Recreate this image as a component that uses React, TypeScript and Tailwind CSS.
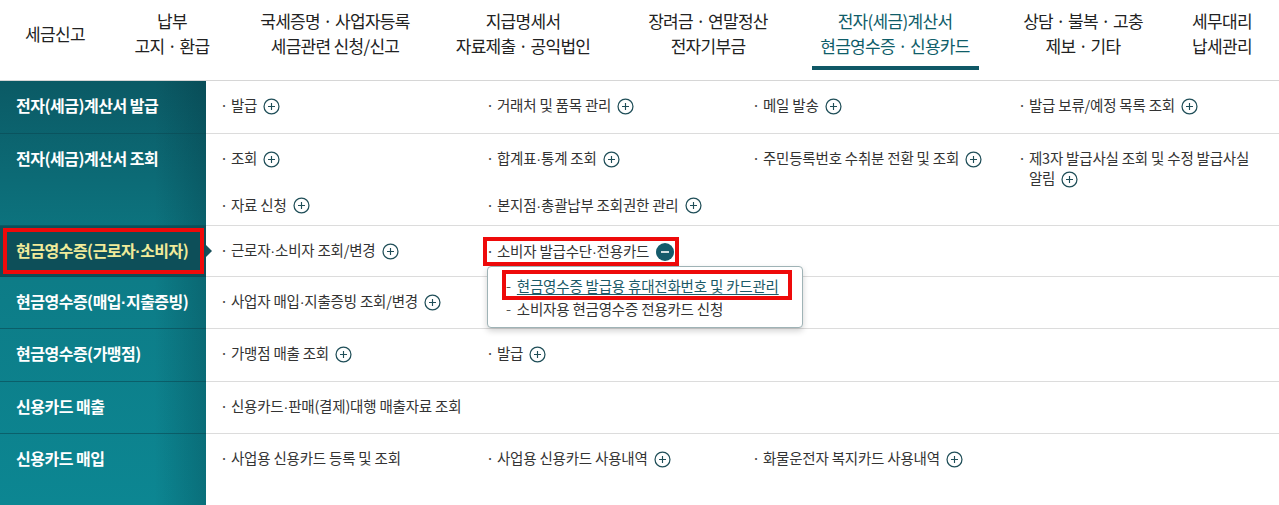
import type { ReactNode } from "react";

type Item = { text: string; icon?: "plus" | "minus" | "none"; open?: boolean };
type Row = { label: string; height: string; active?: boolean; items: Item[] };

const navItems = [
	{ width: "w-[110px]", lines: ["세금신고"] },
	{ width: "w-[124px]", lines: ["납부", "고지 · 환급"] },
	{ width: "w-[202px]", lines: ["국세증명 · 사업자등록", "세금관련 신청/신고"] },
	{ width: "w-[174px]", lines: ["지급명세서", "자료제출 · 공익법인"] },
	{ width: "w-[196px]", lines: ["장려금 · 연말정산", "전자기부금"] },
	{ width: "w-[178px]", lines: ["전자(세금)계산서", "현금영수증 · 신용카드"], active: true },
	{ width: "w-[198px]", lines: ["상담 · 불복 · 고충", "제보 · 기타"] },
	{ width: "w-[80px]", lines: ["세무대리", "납세관리"] },
];

const rows: Row[] = [
	{
		label: "전자(세금)계산서 발급",
		height: "h-[53px]",
		items: [
			{ text: "발급" },
			{ text: "거래처 및 품목 관리" },
			{ text: "메일 발송" },
			{ text: "발급 보류/예정 목록 조회" },
		],
	},
	{
		label: "전자(세금)계산서 조회",
		height: "h-[92px]",
		items: [
			{ text: "조회" },
			{ text: "합계표·통계 조회" },
			{ text: "주민등록번호 수취분 전환 및 조회" },
			{ text: "제3자 발급사실 조회 및 수정 발급사실 알림" },
			{ text: "자료 신청" },
			{ text: "본지점·총괄납부 조회권한 관리" },
		],
	},
	{
		label: "현금영수증(근로자·소비자)",
		height: "h-[51px]",
		active: true,
		items: [
			{ text: "근로자·소비자 조회/변경" },
			{ text: "소비자 발급수단·전용카드", icon: "minus", open: true },
		],
	},
	{
		label: "현금영수증(매입·지출증빙)",
		height: "h-[52px]",
		items: [{ text: "사업자 매입·지출증빙 조회/변경" }],
	},
	{
		label: "현금영수증(가맹점)",
		height: "h-[53px]",
		items: [{ text: "가맹점 매출 조회" }, { text: "발급" }],
	},
	{
		label: "신용카드 매출",
		height: "h-[52px]",
		items: [{ text: "신용카드·판매(결제)대행 매출자료 조회", icon: "none" }],
	},
	{
		label: "신용카드 매입",
		height: "h-[90px]",
		items: [
			{ text: "사업용 신용카드 등록 및 조회", icon: "none" },
			{ text: "사업용 신용카드 사용내역" },
			{ text: "화물운전자 복지카드 사용내역" },
		],
	},
];

// the CJK font gives "·" a full-width box; the site uses a narrow one
function tight(text: string) {
	const parts = text.split("·");
	return parts.map((part, i) => (
		<span key={i}>
			{i > 0 && <span className="font-['Liberation_Sans',sans-serif]">·</span>}
			{part}
		</span>
	));
}

function PlusIcon() {
	return (
		<svg
			viewBox="0 0 18 18"
			className="ml-[6px] inline-block h-[17px] w-[17px] -translate-y-[1px] align-middle"
		>
			<circle cx="9" cy="9" r="7.9" fill="none" stroke="#1f4e58" strokeWidth="1.3" />
			<path d="M9 5.3v7.4M5.3 9h7.4" stroke="#1f4e58" strokeWidth="1.2" />
		</svg>
	);
}

function MinusIcon() {
	return (
		<svg
			viewBox="0 0 18 18"
			className="ml-[7px] inline-block h-[18px] w-[18px] -translate-y-[1px] align-middle"
		>
			<circle cx="9" cy="9" r="9" fill="#155b6b" />
			<path d="M5 9h8" stroke="#ffffff" strokeWidth="1.6" />
		</svg>
	);
}

function RedBox({ className }: { className: string }) {
	return (
		<div
			className={`pointer-events-none absolute border-[4px] border-[#ee0a0a] ${className}`}
		/>
	);
}

function Popup() {
	return (
		<div className="absolute top-[25px] left-[1px] z-10 w-[316px] rounded-[4px] border border-[#9fb3b6] bg-white px-[18px] pt-[8px] pb-[8px] shadow-[0_3px_6px_rgba(0,0,0,0.18)]">
			<div className="relative flex h-[21px] items-center">
				<span className="mr-[6px] text-[#555]">-</span>
				<a className="text-[#1b5a68] underline underline-offset-[2px]">
					현금영수증 발급용 휴대전화번호 및 카드관리
				</a>
				<RedBox className="-top-[5px] -right-[8px] -bottom-[4px] -left-[4px] border-[3.5px]" />
			</div>
			<div className="mt-[2px] flex h-[21px] items-center">
				<span className="mr-[6px] text-[#555]">-</span>
				<span>소비자용 현금영수증 전용카드 신청</span>
			</div>
		</div>
	);
}

function MenuItem({ item }: { item: Item }): ReactNode {
	const icon = item.icon ?? "plus";
	const body = (
		<div className="flex leading-[20px]">
			<span className="mr-[3px] text-[#444]">·</span>
			<span>
				{tight(item.text)}
				{icon === "plus" && <PlusIcon />}
				{icon === "minus" && <MinusIcon />}
			</span>
		</div>
	);
	if (!item.open) return body;
	return (
		<div className="relative inline-block">
			{body}
			<RedBox className="-top-[4px] -right-[5px] -bottom-[4px] -left-[3px] border-[3.5px]" />
			<Popup />
		</div>
	);
}

export default function App() {
	return (
		<div className="h-[505px] w-[1279px] overflow-hidden bg-white font-['Noto_Sans_CJK_KR','Noto_Sans',sans-serif] text-[#333]">
			<nav className="flex h-[81px] border-b border-[#d6d6d6]">
				{navItems.map((nav) => (
					<div key={nav.lines[0]} className={`${nav.width} flex flex-col items-center pt-[8px]`}>
						<div
							className={`flex h-[50px] flex-col items-center justify-center text-center text-[17px] leading-[25px] tracking-[-0.7px] ${
								nav.active ? "text-[#0f5d69]" : "text-[#222]"
							}`}
						>
							{nav.lines.map((line) => (
								<span key={line}>{line}</span>
							))}
						</div>
						{nav.active && <div className="mt-[8px] h-[4px] w-[167px] bg-[#0f5866]" />}
					</div>
				))}
			</nav>

			<div className="flex">
				{/* Left category column */}
				<div className="w-[206px] shrink-0 bg-[linear-gradient(to_right,rgba(0,0,0,0)_75%,rgba(0,30,40,0.22)),linear-gradient(to_bottom,#0b5a65,#0d7c87_45%,#0c8793)]">
					{rows.map((row) => (
						<div
							key={row.label}
							className={`relative ${row.height} border-b border-[#0a4a53]/60 pt-[13px] pl-[16px] text-[16px] leading-[22px] font-bold tracking-[-0.5px] ${
								row.active ? "bg-[#0d4f59] text-[#f1eb9a]" : "text-white"
							}`}
						>
							{tight(row.label)}
							{row.active && (
								<>
									<RedBox className="top-[2px] right-[2px] bottom-[2px] left-[3px]" />
									<div className="absolute top-[19px] left-full h-0 w-0 border-y-[6px] border-l-[6px] border-y-transparent border-l-[#17505a]" />
								</>
							)}
						</div>
					))}
				</div>

				{/* Right link grid */}
				<div className="flex-1">
					{rows.map((row) => (
						<div
							key={row.label}
							className={`${row.height} grid grid-cols-[266px_266px_266px_1fr] content-start gap-y-[6px] border-b border-[#dcdcdc] pt-[14px] pr-[14px] pl-[14px] text-[14.5px] tracking-[-0.2px]`}
						>
							{row.items.map((item, i) => (
								<div key={item.text + i} className={i % 4 === 3 ? "pr-[10px]" : ""}>
									<MenuItem item={item} />
								</div>
							))}
						</div>
					))}
				</div>
			</div>
		</div>
	);
}
